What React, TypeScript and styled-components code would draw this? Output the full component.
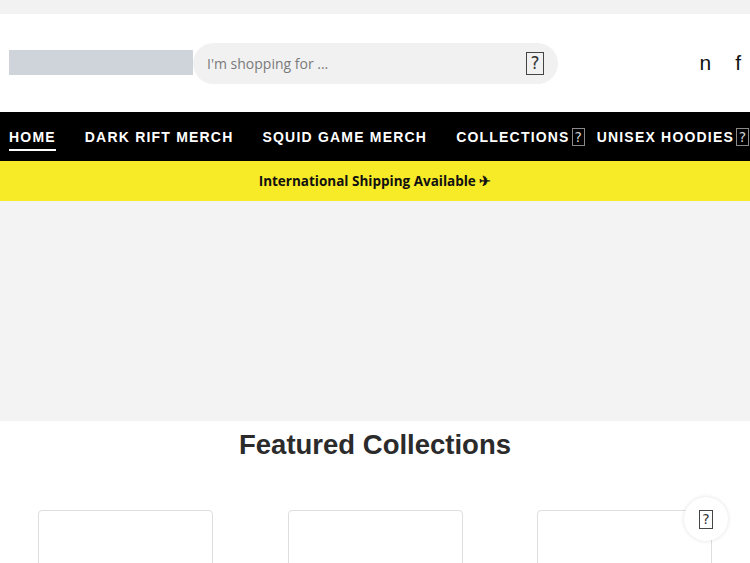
import styled, { createGlobalStyle } from "styled-components";

const GlobalStyle = createGlobalStyle`
  html, body {
    margin: 0;
    padding: 0;
    background: #ffffff;
    font-family: "Liberation Sans", Arial, sans-serif;
    overflow: hidden;
  }
  * {
    box-sizing: border-box;
  }
`;

const TopStrip = styled.div`
  height: 14px;
  background: #f2f2f2;
`;

const Header = styled.header`
  height: 98px;
  display: flex;
  align-items: center;
  padding: 0 9px;
  background: #ffffff;
`;

const LogoBox = styled.div`
  width: 184px;
  height: 25px;
  margin-top: -1px;
  background: #cfd4db;
  flex-shrink: 0;
`;

const SearchPill = styled.div`
  width: 365px;
  height: 41px;
  border-radius: 21px;
  background: #f1f1f1;
  display: flex;
  align-items: center;
  justify-content: space-between;
  padding: 0 14px;
`;

const Placeholder = styled.span`
  font-family: "Open Sans", sans-serif;
  font-size: 14px;
  color: #7a7a7a;
`;

const Tofu = styled.span<{ $w: number; $h: number; $dark?: boolean }>`
  display: inline-flex;
  align-items: center;
  justify-content: center;
  flex-shrink: 0;
  width: ${(p) => p.$w}px;
  height: ${(p) => p.$h}px;
  border: 1.5px solid ${(p) => (p.$dark ? "#8a8a8a" : "#444")};
  font-family: "DejaVu Sans", sans-serif;
  font-weight: normal;
  font-size: ${(p) => Math.round(p.$h * 0.75)}px;
  line-height: 1;
  color: ${(p) => (p.$dark ? "#cfcfcf" : "#333")};
  letter-spacing: 0;
`;

const Socials = styled.div`
  margin-left: auto;
  display: flex;
  gap: 24px;
  font-family: "Liberation Sans", Arial, sans-serif;
  font-size: 21px;
  color: #111;
`;

const Nav = styled.nav`
  height: 49px;
  background: #000;
  display: flex;
  align-items: center;
  gap: 29px;
  padding: 0 9px;
  white-space: nowrap;
  overflow: hidden;
`;

const NavItem = styled.a<{ $active?: boolean; $drop?: boolean }>`
  display: inline-flex;
  align-items: center;
  gap: 2px;
  flex-shrink: 0;
  color: #fff;
  font-family: "Liberation Sans", Arial, sans-serif;
  font-weight: bold;
  font-size: 14px;
  letter-spacing: 1.2px;
  text-decoration: none;
  padding: 3px 0 4px;
  border-bottom: 2px solid ${(p) => (p.$active ? "#fff" : "transparent")};
  margin-top: 3px;
  margin-right: ${(p) => (p.$drop ? "-17px" : "0")};
`;

const Announcement = styled.div`
  height: 40px;
  background: #f7ea27;
  display: flex;
  align-items: center;
  justify-content: center;
  font-family: "Open Sans", sans-serif;
  font-weight: bold;
  font-size: 13.5px;
  color: #111;
`;

const Hero = styled.div`
  height: 220px;
  background: #f3f3f3;
`;

const Featured = styled.section`
  padding-top: 8px;
  position: relative;
`;

const Title = styled.h2`
  margin: 0;
  text-align: center;
  font-family: "Liberation Sans", Arial, sans-serif;
  font-weight: bold;
  font-size: 27.5px;
  color: #2b2b2b;
`;

const CardRow = styled.div`
  display: grid;
  grid-template-columns: repeat(3, 175px);
  justify-content: space-between;
  padding: 0 38px;
  margin-top: 49px;
`;

const Card = styled.div`
  height: 80px;
  border: 1px solid #dedede;
  border-radius: 4px;
  background: #fff;
`;

const FloatButton = styled.button`
  position: absolute;
  right: 22px;
  top: 76px;
  width: 44px;
  height: 44px;
  border-radius: 50%;
  border: none;
  background: #fff;
  box-shadow: 0 0 4px rgba(0, 0, 0, 0.12);
  display: flex;
  align-items: center;
  justify-content: center;
  padding: 0;
`;

const navItems = [
  { label: "HOME", active: true },
  { label: "DARK RIFT MERCH" },
  { label: "SQUID GAME MERCH" },
  { label: "COLLECTIONS", drop: true },
  { label: "UNISEX HOODIES", drop: true },
];

export default function App() {
  return (
    <>
      <GlobalStyle />
      <TopStrip />
      <Header>
        <LogoBox />
        <SearchPill>
          <Placeholder>I'm shopping for ...</Placeholder>
          <Tofu $w={18} $h={23}>?</Tofu>
        </SearchPill>
        <Socials>
          <span>n</span>
          <span>f</span>
        </Socials>
      </Header>
      <Nav>
        {navItems.map((item) => (
          <NavItem key={item.label} $active={item.active} $drop={item.drop}>
            {item.label}
            {item.drop && (
              <Tofu $w={13} $h={18} $dark>
                ?
              </Tofu>
            )}
          </NavItem>
        ))}
      </Nav>
      <Announcement>International Shipping Available ✈</Announcement>
      <Hero />
      <Featured>
        <Title>Featured Collections</Title>
        <CardRow>
          <Card />
          <Card />
          <Card />
        </CardRow>
        <FloatButton>
          <Tofu $w={14} $h={19}>?</Tofu>
        </FloatButton>
      </Featured>
    </>
  );
}
